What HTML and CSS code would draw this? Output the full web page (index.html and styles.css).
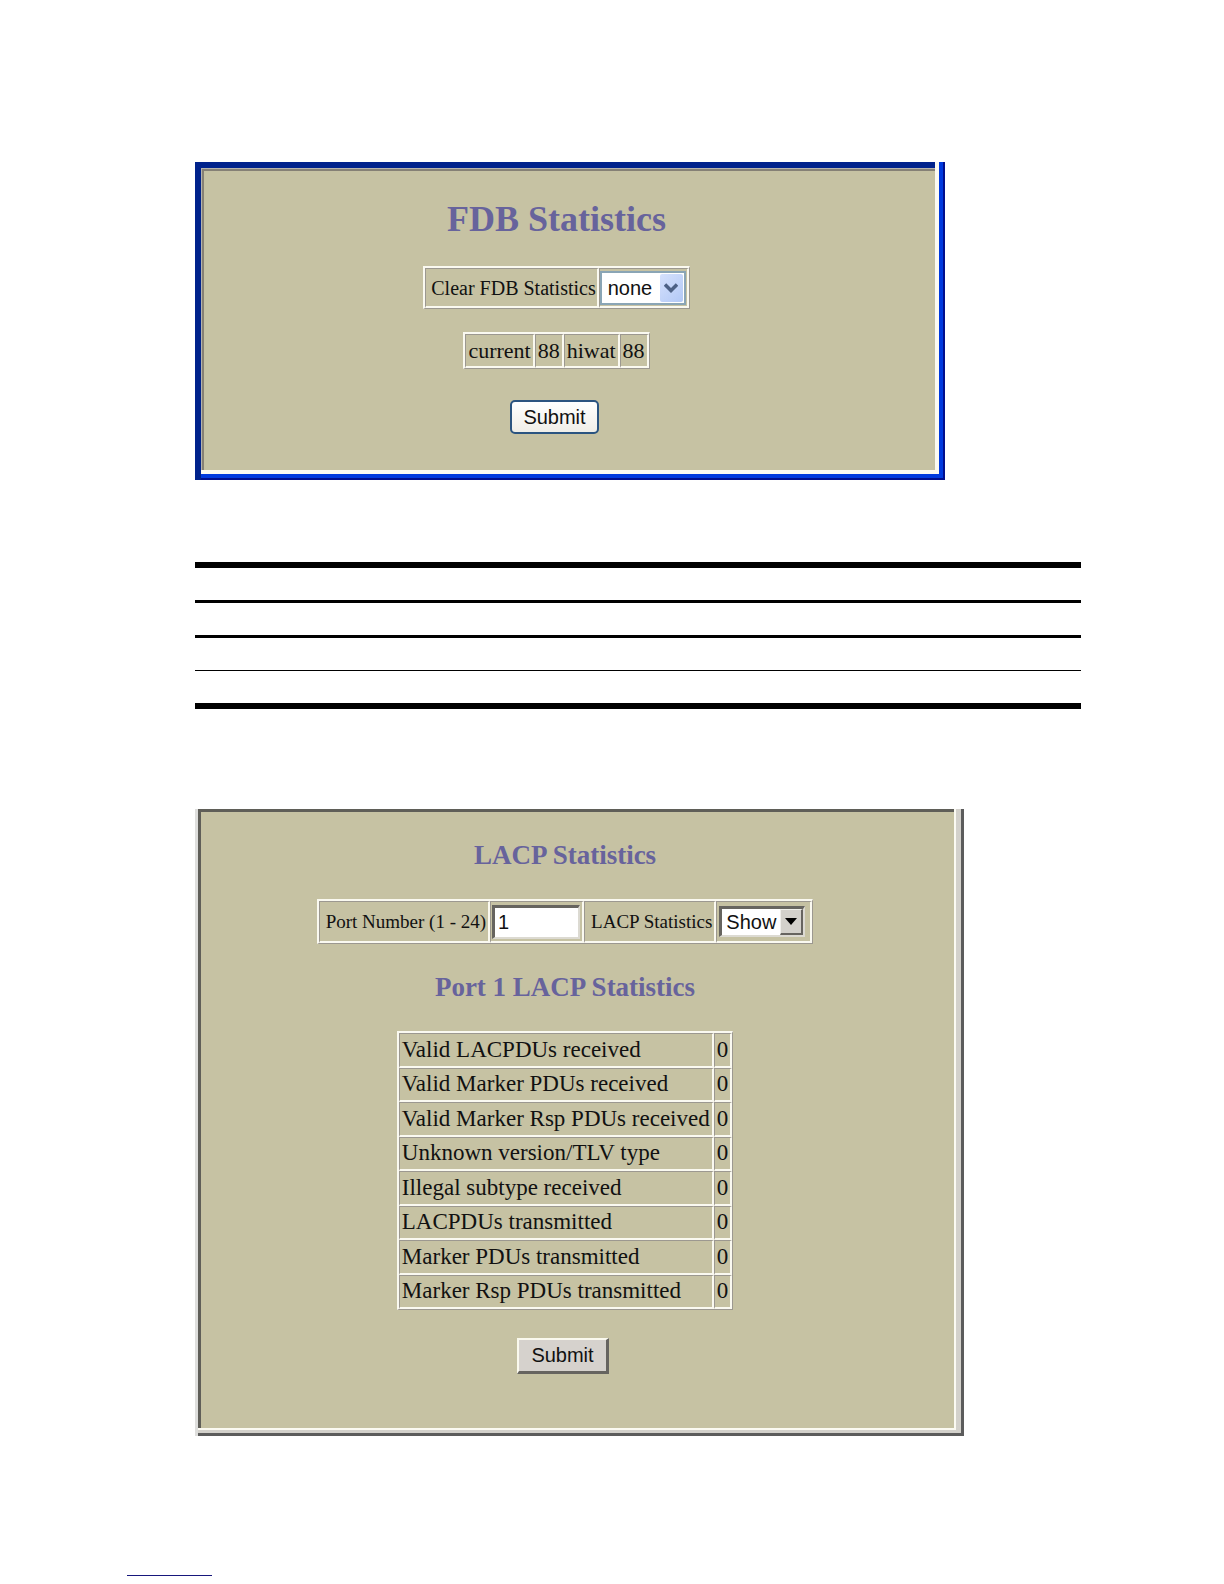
FILE: index.html
```html
<!DOCTYPE html>
<html lang="en">

<head>
    <meta charset="UTF-8">
    <meta name="viewport" content="width=device-width, initial-scale=1.0">
    <title>Statistics</title>
    <link rel="stylesheet" href="styles.css">
</head>

<body>

    <main class="page">

        <section class="frame frame-blue">
            <div class="view">
                <form class="pane">
                    <h1>FDB Statistics</h1>

                    <table class="grid form-grid">
                        <tr>
                            <td><label for="clearFdb">Clear FDB Statistics</label></td>
                            <td>
                                <div class="drop">
                                    <select id="clearFdb">
                                        <option>none</option>
                                    </select>
                                    <span class="arrow">
                                        <svg width="14" height="10" viewBox="0 0 14 10">
                                            <path d="M1 1.5 L7 7.5 L13 1.5" fill="none" stroke="#4d6185" stroke-width="3.5" />
                                        </svg>
                                    </span>
                                </div>
                            </td>
                        </tr>
                    </table>

                    <table class="grid count-grid">
                        <tr>
                            <td>current</td>
                            <td>88</td>
                            <td>hiwat</td>
                            <td>88</td>
                        </tr>
                    </table>

                    <button type="button" class="btn">Submit</button>
                </form>
            </div>
        </section>

        <!-- ruled table, cells are blank -->
        <table class="rules">
            <tr><td></td></tr>
            <tr><td></td></tr>
            <tr><td></td></tr>
            <tr><td></td></tr>
        </table>

        <section class="frame frame-gray">
            <div class="view">
                <form class="pane">
                    <h2>LACP Statistics</h2>

                    <table class="grid form-grid">
                        <tr>
                            <td><label for="port">Port Number (1 - 24)</label></td>
                            <td><input type="text" id="port" value="1"></td>
                            <td><label for="lacp">LACP Statistics</label></td>
                            <td>
                                <div class="drop">
                                    <select id="lacp">
                                        <option>Show</option>
                                    </select>
                                    <span class="arrow">
                                        <svg width="12" height="7" viewBox="0 0 12 7">
                                            <path d="M0 0 H12 L6 7 Z" fill="#000" />
                                        </svg>
                                    </span>
                                </div>
                            </td>
                        </tr>
                    </table>

                    <h2>Port 1 LACP Statistics</h2>

                    <table class="grid stats-grid">
                        <tr><td>Valid LACPDUs received</td><td>0</td></tr>
                        <tr><td>Valid Marker PDUs received</td><td>0</td></tr>
                        <tr><td>Valid Marker Rsp PDUs received</td><td>0</td></tr>
                        <tr><td>Unknown version/TLV type</td><td>0</td></tr>
                        <tr><td>Illegal subtype received</td><td>0</td></tr>
                        <tr><td>LACPDUs transmitted</td><td>0</td></tr>
                        <tr><td>Marker PDUs transmitted</td><td>0</td></tr>
                        <tr><td>Marker Rsp PDUs transmitted</td><td>0</td></tr>
                    </table>

                    <button type="button" class="btn">Submit</button>
                </form>
            </div>
        </section>

    </main>

    <footer>
        <hr class="line">
    </footer>

</body>

</html>
```

FILE: styles.css
```css
* {
    margin: 0;
    padding: 0;
    box-sizing: border-box;
}

body {
    background: #fff;
    color: #111;
    font-family: "Liberation Serif", "Times New Roman", serif;
}

.page {
    padding: 162px 143px 0 195px;
}

/* window frames */
.frame-blue {
    margin-right: 136px;
    padding: 0 6px 6px 0;
    border-left: 6px solid #00228c;
    background: #003ade;
    box-shadow: inset -2px -2px #000f8e;
}

.frame-gray {
    margin-right: 117px;
    padding: 0 8px 6px 0;
    border-left: 3px solid #dededc;
    background: #d3d1cb;
    box-shadow: inset -3px -3px #5c5c5c;
}

.view {
    border-right: 4px solid #fbfaf2;
    border-bottom: 4px solid #fbfaf2;
}

.frame-gray .view {
    border-width: 0 2px 2px 0;
}

.pane {
    display: flex;
    flex-direction: column;
    align-items: center;
    background: #c6c2a3;
}

.frame-blue .pane {
    padding: 31px 26px 36px 3px;
    border-top: 6px solid #00228c;
    box-shadow: inset 1px 1px #b5b3ac, inset 3px 3px #858075;
}

.frame-gray .pane {
    padding: 31px 25px 54px 3px;
    box-shadow: inset 3px 3px #5f5e58;
}

h1,
h2 {
    color: #67639c;
}

h1 {
    font-size: 36px;
    line-height: 40px;
    margin-bottom: 27px;
}

h2 {
    font-size: 27px;
    line-height: 30px;
    margin-bottom: 29px;
}

/* beveled tables */
.grid {
    border-collapse: separate;
    border-spacing: 0;
    border: solid;
    border-width: 2px 1px 1px 2px;
    border-color: #faf9f0 #9c9890 #9c9890 #faf9f0;
    font-size: 23px;
    line-height: 26px;
}

.grid td {
    border: solid;
    border-width: 1px 2px 2px 1px;
    border-color: #9c9890 #faf9f0 #faf9f0 #9c9890;
    padding: 0 2px;
    white-space: nowrap;
}

.form-grid {
    height: 43px;
    font-size: 20px;
}

.form-grid td {
    padding: 0 1px;
}

.form-grid label {
    padding-left: 5px;
}

.frame-blue .form-grid td {
    padding: 0 1px 0 0;
}

.frame-gray .form-grid {
    height: 45px;
    margin-bottom: 28px;
    font-size: 19px;
}

.frame-gray .form-grid td {
    padding: 0 2px 0 1px;
}

.frame-gray .form-grid td:last-child {
    padding: 0 5px 0 2px;
}

.count-grid {
    height: 37px;
    margin: 23px 0 31px;
    font-size: 22px;
}

.stats-grid {
    height: 279px;
    margin-bottom: 28px;
}

/* controls */
select,
input,
.btn {
    font-family: "Liberation Sans", Arial, sans-serif;
    font-size: 20px;
    color: #111;
}

.drop {
    position: relative;
    width: 86px;
}

select {
    display: block;
    appearance: none;
    width: 100%;
    height: 34px;
    padding-left: 6px;
    border: 2px solid #8aa5b5;
    border-radius: 0;
    background: #fff;
}

.arrow {
    position: absolute;
    top: 3px;
    right: 3px;
    bottom: 3px;
    width: 23px;
    display: flex;
    align-items: center;
    justify-content: center;
    border-radius: 2px;
    background: linear-gradient(135deg, #d5e1fc, #b2c8f6);
    pointer-events: none;
}

.frame-gray select,
input {
    border: solid;
    border-width: 3px 2px 2px 3px;
    border-color: #66645f #dcdad2 #dcdad2 #66645f;
}

.frame-gray select {
    height: 31px;
    padding-left: 4px;
}

.frame-gray .arrow {
    right: 2px;
    bottom: 2px;
    border: solid;
    border-width: 1px 2px 2px 1px;
    border-color: #f0efeb #66645f #66645f #f0efeb;
    border-radius: 0;
    background: #d3d1cb;
}

input {
    display: block;
    width: 88px;
    height: 34px;
    padding-left: 3px;
    background: #fff;
}

.btn {
    width: 89px;
    height: 34px;
    margin-right: 4px;
    border: 2px solid #2b5480;
    border-radius: 5px;
    background: linear-gradient(#fff, #f0eee8);
}

.frame-gray .btn {
    width: 92px;
    height: 36px;
    border: solid;
    border-width: 2px 3px 3px 2px;
    border-color: #faf9ee #66645f #66645f #faf9ee;
    border-radius: 0;
    background: #d6d2cd;
}

/* ruled table */
.rules {
    width: 100%;
    margin: 82px 0 100px;
    border-collapse: separate;
    border-spacing: 0;
    border-top: 6px solid #000;
}

.rules td {
    height: 35px;
    border-bottom: 3px solid #000;
}

.rules tr:nth-child(3) td {
    height: 33px;
    border-bottom-width: 1px;
}

.rules tr:last-child td {
    height: 38px;
    border-bottom-width: 6px;
}

footer {
    padding: 139px 127px 8px;
}

.line {
    width: 85px;
    border: 0;
    border-top: 1px solid #17177c;
}
```
